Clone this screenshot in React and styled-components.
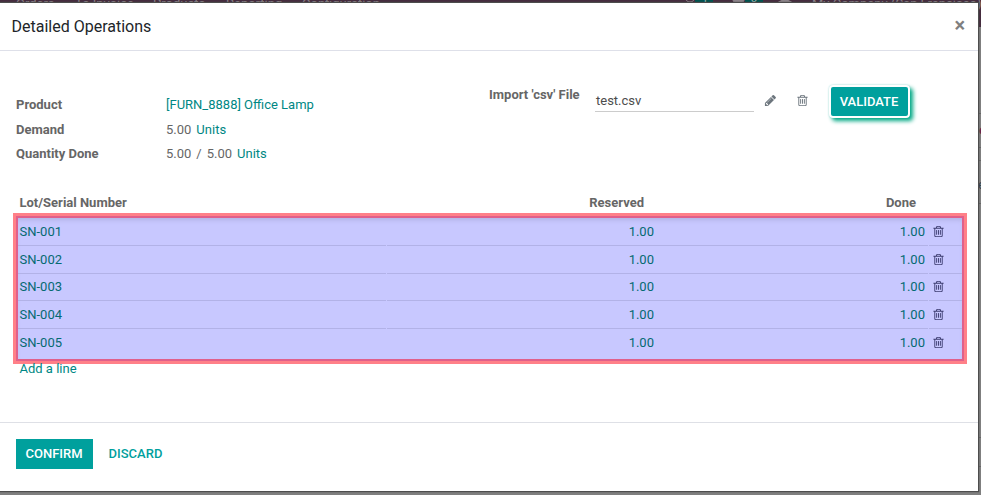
import React from "react";
import styled, { createGlobalStyle } from "styled-components";

const Global = createGlobalStyle`
  * { box-sizing: border-box; }
  html, body { margin: 0; height: 100%; overflow: hidden; }
  body { font-family: Roboto, "Liberation Sans", sans-serif; font-size: 13px; line-height: 20px; color: #666; background: #7f7f7f; }
  #root { height: 100%; }
`;
const Page = styled.div`
  position: relative;
  height: 495px;
  overflow: hidden;
`;
const Navbar = styled.nav`
  position: relative;
  height: 27px;
  background: #452c3e;
  color: #8b8389;
`;
const NavItem = styled.span`
  position: absolute;
  top: -6px;
  left: ${(p) => p.$x}px;
  white-space: nowrap;
  line-height: 20px;
`;
const NavBadge = styled.span`
  position: absolute;
  top: -9px;
  left: ${(p) => p.$x}px;
  width: 18px;
  height: 14px;
  background: #00524f;
  color: #a0b5b4;
  font-size: 11px;
  line-height: 15px;
  text-align: center;
`;
const NavIcon = styled.svg`
  position: absolute;
  top: -9px;
  left: ${(p) => p.$x}px;
  fill: ${(p) => (p.$filled ? "#8b8389" : "none")};
  stroke: #8b8389;
`;
const Backdrop = styled.div`
  height: 468px;
  display: flex;
  flex-direction: column;
  align-items: flex-end;
`;
const BackLine = styled.i`
  width: 4px;
  height: ${(p) => p.$gap}px;
  border-bottom: 1px solid #666;
`;
const BackGlyph = styled.span`
  position: absolute;
  left: 978px;
  top: ${(p) => p.$y}px;
  color: ${(p) => p.$color};
  font-size: ${(p) => p.$size}px;
  line-height: 14px;
`;
const Dialog = styled.section`
  position: absolute;
  top: 3px;
  left: 0;
  width: 978px;
  height: 488px;
  background: #fff;
  box-shadow: 0 0 1px 1px #4d4d4d;
  display: flex;
  flex-direction: column;
`;
const Header = styled.header`
  height: 48px;
  flex: none;
  border-bottom: 1px solid #dee0e9;
  display: flex;
  justify-content: space-between;
  padding: 0 13px 0 11.5px;
`;
const Title = styled.h4`
  margin: 0;
  font-size: 16px;
  font-weight: 400;
  line-height: 47px;
  color: #212529;
`;
const Close = styled.button`
  border: 0;
  padding: 0;
  background: none;
  font: 700 20px/45px Roboto, sans-serif;
  height: 45px;
  color: #7f7f7f;
`;
const Body = styled.main`
  height: 371px;
  padding-top: 33px;
`;
const Details = styled.div`
  display: grid;
  grid-template-columns: 489px 1fr;
  height: 109px;
`;
const Fields = styled.dl`
  margin: 0;
  padding: 11px 0 0 16px;
  display: grid;
  grid-template-columns: 150px 1fr;
  grid-template-rows: 25px 24px 24px;
`;
const Label = styled.dt`
  font-weight: 700;
  line-height: 20px;
  color: #666;
`;
const Value = styled.dd`
  margin: 0;
  display: flex;
  gap: 5px;
`;
const Link = styled.a`
  color: #008784;
  white-space: pre;
`;
const Upload = styled.div`
  display: flex;
  align-items: flex-start;
`;
const UploadLabel = styled.label`
  width: 106px;
  margin-top: 1px;
  font-weight: 700;
  line-height: 20px;
`;
const FileName = styled.div`
  margin-top: 3px;
  width: 159px;
  height: 25px;
  padding: 2px 0 0 1px;
  line-height: 24px;
  color: #4c4c4c;
  border-bottom: 1px solid #ccc;
`;
const IconButton = styled.button`
  border: 0;
  padding: 0;
  background: none;
  width: 13px;
  height: 13px;
  margin: 10px 0 0 ${(p) => p.$gap}px;
  color: #6c757d;
  display: flex;
`;
const Validate = styled.button`
  margin: 1px 0 0 19.5px;
  width: 81px;
  height: 33px;
  padding: 0;
  border: 2px solid #fff;
  border-radius: 4px;
  background: #00a09d;
  color: #fff;
  font: 500 13px/29px Roboto, sans-serif;
  box-shadow: 0 0 2px #00a09d55, 3px 3px 4px #00a884;
`;
const TableHead = styled.div`
  display: grid;
  grid-template-columns: 367.5px 257px 272px;
  margin-left: 19.5px;
  height: 20px;
  font-weight: 700;
  line-height: 20px;
  text-align: right;

  span:first-child { text-align: left; }
`;
const Highlight = styled.div`
  margin-left: 13px;
  width: 954px;
  height: 151px;
  border: 3px solid #ff8088;
`;
const HighlightInner = styled.div`
  height: 145px;
  border: 2px solid #e0608b;
  background: #c8c8ff;
  box-shadow: inset 0 4px 5px -2px #b2b2e4;
`;
const Row = styled.div`
  display: grid;
  grid-template-columns: 369px 268px 274px 1fr;
  height: ${(p) => p.$height}px;
  line-height: 27px;
`;
const Cell = styled.div`
  color: #056a72;
  text-align: ${(p) => (p.$start ? "left" : "right")};
  padding: 0 ${(p) => p.$end || 0}px 0 ${(p) => (p.$start ? 1.5 : 0)}px;
  border-bottom: ${(p) => (p.$last ? "0" : "1px solid #b2b2e7")};
  margin-right: ${(p) => (p.$split ? 1 : 0)}px;
`;
const Trash = styled(Cell)`
  display: flex;
  align-items: flex-start;
  padding: 7px 0 0 3px;
  color: #3c3c70;
`;
const AddLine = styled(Link)`
  display: block;
  margin: -5px 0 0 19.5px;
  width: 100px;
  line-height: 20px;
`;
const Footer = styled.footer`
  flex: 1;
  border-top: 1px solid #dee0e6;
  display: flex;
  padding: 16px;
`;
const Action = styled.button`
  height: 30px;
  width: ${(p) => (p.$primary ? 77 : 85)}px;
  border: 0;
  padding: ${(p) => (p.$primary ? "0 1px 0 0" : "0")};
  background: ${(p) => (p.$primary ? "#00a09d" : "transparent")};
  color: ${(p) => (p.$primary ? "#fff" : "#00a09d")};
  font: 500 13px/30px Roboto, sans-serif;
`;

const TrashIcon = () => (
  <svg width="13" height="13" viewBox="0 0 1792 1792" fill="currentColor">
    <path d="M704 736v576q0 14-9 23t-23 9h-64q-14 0-23-9t-9-23v-576q0-14 9-23t23-9h64q14 0 23 9t9 23zm256 0v576q0 14-9 23t-23 9h-64q-14 0-23-9t-9-23v-576q0-14 9-23t23-9h64q14 0 23 9t9 23zm256 0v576q0 14-9 23t-23 9h-64q-14 0-23-9t-9-23v-576q0-14 9-23t23-9h64q14 0 23 9t9 23zm128 724v-948h-896v948q0 22 7 40.500t14.500 27 10.500 8.500h832q3 0 10.500-8.500t14.500-27 7-40.500zm-672-1076h448l-48-117q-7-9-17-11h-317q-10 2-17 11zm928 32v64q0 14-9 23t-23 9h-96v948q0 83-47 143.500t-113 60.500h-832q-66 0-113-58.500t-47-141.500v-952h-96q-14 0-23-9t-9-23v-64q0-14 9-23t23-9h309l70-167q15-37 54-63t79-26h320q40 0 79 26t54 63l70 167h309q14 0 23 9t9 23z" />
  </svg>
);
const PencilIcon = () => (
  <svg width="13" height="13" viewBox="0 0 1792 1792" fill="currentColor">
    <path d="M491 1536l91-91-235-235-91 91v107h128v128h107zm523-928q0-22-22-22-10 0-17 7l-542 542q-7 7-7 17 0 22 22 22 10 0 17-7l542-542q7-7 7-17zm-54-192l416 416-832 832h-416v-416zm683 96q0 53-37 90l-166 166-416-416 166-165q36-38 90-38 53 0 91 38l235 234q37 39 37 91z" />
  </svg>
);

const menu = [["Orders", 16], ["To Invoice", 75], ["Products", 153], ["Reporting", 226], ["Configuration", 302], ["My Company (San Francisco)", 812]];
const lots = [
  ["SN-001", 28],
  ["SN-002", 27],
  ["SN-003", 28],
  ["SN-004", 28],
  ["SN-005", 30],
];

export default function App() {
  return (
    <Page>
      <Global />
      <Navbar>
        {menu.map(([name, x]) => <NavItem key={name} $x={x}>{name}</NavItem>)}
        <NavIcon $x={684} width="12" height="12"><circle cx="6" cy="6" r="5" /></NavIcon>
        <NavBadge $x={695}>4</NavBadge>
        <NavIcon $x={732} $filled width="14" height="12"><rect x="1" y="1" width="11" height="10" rx="2" /></NavIcon>
        <NavBadge $x={745}>3</NavBadge>
        <NavIcon $x={777} width="16" height="13"><path d="M1 12q7-5 14 0M5 12q3-3 6 0" strokeWidth="2" /></NavIcon>
      </Navbar>
      <Backdrop>
        {[87, 34, 13, 43, 234, 29].map((gap, i) => <BackLine key={i} $gap={gap} />)}
      </Backdrop>
      <BackGlyph $y={123} $color="#682449" $size={18}>●</BackGlyph>
      <BackGlyph $y={178} $color="#34404b" $size={13}>e</BackGlyph>
      <Dialog>
        <Header>
          <Title>Detailed Operations</Title>
          <Close aria-label="Close">×</Close>
        </Header>
        <Body>
          <Details>
            <Fields>
              <Label>Product</Label>
              <Value><Link>[FURN_8888] Office Lamp</Link></Value>
              <Label>Demand</Label>
              <Value><span>5.00</span><Link>Units</Link></Value>
              <Label>Quantity Done</Label>
              <Value><span>5.00</span><span>/</span><span>5.00</span><Link>Units</Link></Value>
            </Fields>
            <Upload>
              <UploadLabel>Import 'csv' File</UploadLabel>
              <FileName>test.csv</FileName>
              <IconButton $gap={9.5} aria-label="Edit"><PencilIcon /></IconButton>
              <IconButton $gap={19.5} aria-label="Delete"><TrashIcon /></IconButton>
              <Validate>VALIDATE</Validate>
            </Upload>
          </Details>
          <TableHead>
            <span>Lot/Serial Number</span>
            <span>Reserved</span>
            <span>Done</span>
          </TableHead>
          <Highlight>
            <HighlightInner>
              {lots.map(([name, height], i) => (
                <Row key={name} $height={height}>
                  <Cell $start $split $last={i === 4}>{name}</Cell>
                  <Cell $end={1} $last={i === 4}>1.00</Cell>
                  <Cell $split $end={3} $last={i === 4}>1.00</Cell>
                  <Trash $last={i === 4}><TrashIcon /></Trash>
                </Row>
              ))}
            </HighlightInner>
          </Highlight>
          <AddLine>Add a line</AddLine>
        </Body>
        <Footer>
          <Action $primary>CONFIRM</Action>
          <Action>DISCARD</Action>
        </Footer>
      </Dialog>
    </Page>
  );
}
